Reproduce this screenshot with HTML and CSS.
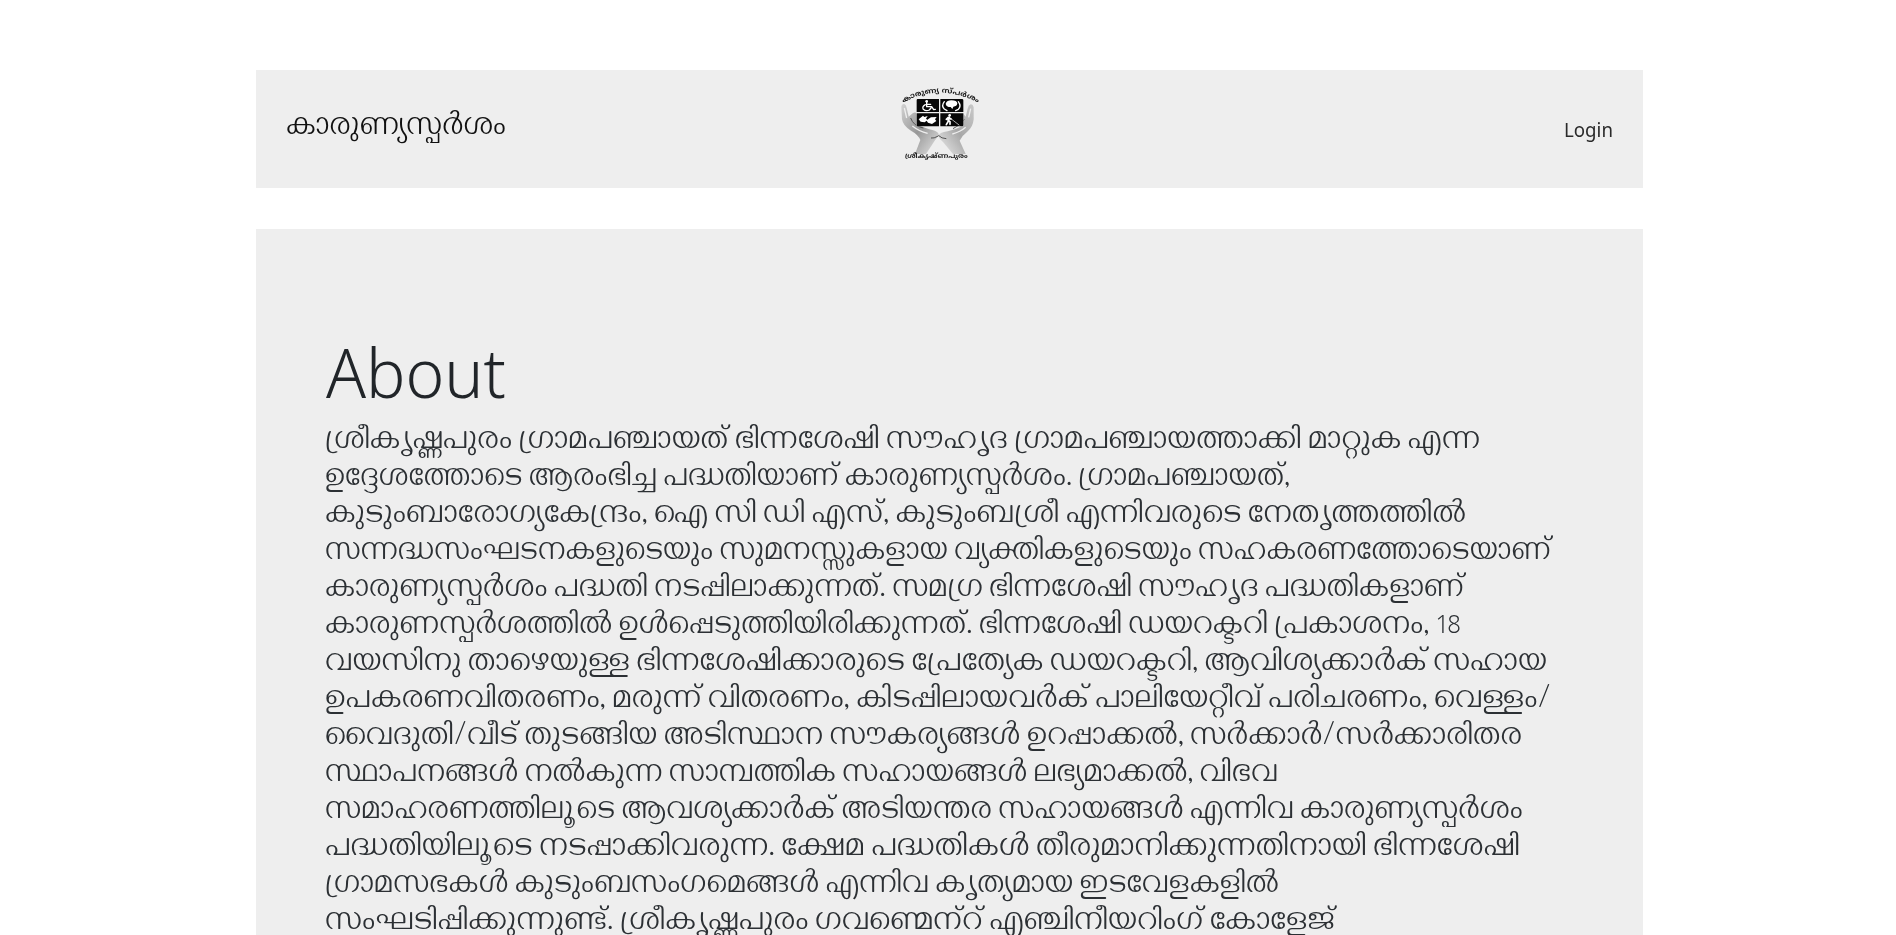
FILE: index.html
```html
<!DOCTYPE html>
<html lang="ml">
<head>
<meta charset="utf-8">
<title>കാരുണ്യസ്പർശം</title>
<link rel="stylesheet" href="styles.css">
</head>
<body>
<header class="navbar">
  <a class="brand"><span class="fit" data-width="220">കാരുണ്യസ്പർശം</span></a>
  <svg class="logo" width="100" height="95" viewBox="0 0 300 285">
    <defs>
      <linearGradient id="skin" x1="0" y1="0" x2="1" y2="1">
        <stop offset="0" stop-color="#d2d2d2"/><stop offset=".5" stop-color="#989898"/><stop offset="1" stop-color="#e4e4e4"/>
      </linearGradient>
      <linearGradient id="skin2" x1="1" y1="0" x2="0" y2="1">
        <stop offset="0" stop-color="#c8c8c8"/><stop offset=".5" stop-color="#a8a8a8"/><stop offset="1" stop-color="#ececec"/>
      </linearGradient>
      <path id="arc" d="M42 80Q150 20 267 80"/>
    </defs>
    <path fill="url(#skin)" d="M37 92q1-10 9-8 6 3 7 12l6 26 12-10q10-6 12 2l3 32q26 12 44 16 16 4 19 12-2 10-12 20l-26 40H78l16-42q-6-16-28-28-24-14-27-34z"/>
    <path fill="url(#skin2)" d="M254 94q-2-10-9-9-7 3-9 13l-6 24-8-10-2 38q-22 12-44 16-26 4-28 14 2 8 14 18l30 36h38l-18-40q6-14 22-26 18-14 20-38z"/>
    <path d="M65 126q8 24 38 30M226 130q-14 20-34 28M148 180q-14 8-22 6M148 178q10 10 24 10" fill="none" stroke="#555" stroke-width="3"/>
    <path d="M46 96l7 30M245 98l-6 26M70 150q20 16 46 22M230 154q-16 14-40 20" fill="none" stroke="#eee" stroke-width="4"/>
    <rect x="82" y="68" width="141" height="83" rx="5" fill="#eee"/>
    <path fill="#070707" d="M86 69h64v39H83V73q0-4 3-4zM154 69h65q4 0 4 4v35h-69zM83 112h67v39H87q-4 0-4-4zM154 112h69v35q0 4-4 4h-65z"/>
    <g fill="none" stroke="#fff" stroke-width="4" stroke-linecap="round" stroke-linejoin="round">
      <path d="M113 78v14h15l6 9 5-1M114 85h11M109 86q-11 6-6 14 8 7 18 2l5-6"/>
      <path d="M166 77q-10 12 0 22l8 5M208 77q10 13 0 23l-8 4"/>
      <path stroke-width="5" d="M181 123l-4 10 6 4v8M180 132l-8 14M172 130l6-6 8 5"/>
      <path stroke-width="2" d="M187 129l23 18"/>
    </g>
    <circle cx="113" cy="76" r="4" fill="#fff"/>
    <circle cx="182" cy="118" r="4" fill="#fff"/>
    <path fill="#fff" d="M170 83q4-10 17-10 17 0 18 9-1 10-12 10l-3 7-5-6q-14 0-15-10zM89 130l13-11 4 4 10-3-5 8 5 4-9 7-12-2zM118 129l8-5 17-1-5 7 4 5-13 9-12-4-4-6z"/>
    <text class="logo-top"><textPath href="#arc" textLength="236" lengthAdjust="spacingAndGlyphs">കാരുണ്യ സ്പർശം</textPath></text>
    <text class="logo-bottom" x="48" y="247" textLength="188" lengthAdjust="spacingAndGlyphs">ശ്രീകൃഷ്ണപുരം</text>
  </svg>
  <a class="login"><span class="fit" data-width="49">Login</span></a>
</header>
<main class="about">
  <h1><span class="fit" data-width="180">About</span></h1>
  <p>
    <span class="line fit" data-width="1155">ശ്രീകൃഷ്ണപുരം ഗ്രാമപഞ്ചായത് ഭിന്നശേഷി സൗഹൃദ ഗ്രാമപഞ്ചായത്താക്കി മാറ്റുക എന്ന</span>
    <span class="line fit" data-width="965">ഉദ്ദേശത്തോടെ ആരംഭിച്ച പദ്ധതിയാണ് കാരുണ്യസ്പർശം. ഗ്രാമപഞ്ചായത്,</span>
    <span class="line fit" data-width="1141">കുടുംബാരോഗ്യകേന്ദ്രം, ഐ സി ഡി എസ്, കുടുംബശ്രീ എന്നിവരുടെ നേതൃത്തത്തിൽ</span>
    <span class="line fit" data-width="1226">സന്നദ്ധസംഘടനകളുടെയും സുമനസ്സുകളായ വ്യക്തികളുടെയും സഹകരണത്തോടെയാണ്</span>
    <span class="line fit" data-width="1139">കാരുണ്യസ്പർശം പദ്ധതി നടപ്പിലാക്കുന്നത്. സമഗ്ര ഭിന്നശേഷി സൗഹൃദ പദ്ധതികളാണ്</span>
    <span class="line fit" data-width="1134">കാരുണസ്പർശത്തിൽ ഉൾപ്പെടുത്തിയിരിക്കുന്നത്. ഭിന്നശേഷി ഡയറക്ടറി പ്രകാശനം, <span class="num">18</span></span>
    <span class="line fit" data-width="1222">വയസിനു താഴെയുള്ള ഭിന്നശേഷിക്കാരുടെ പ്രേത്യേക ഡയറക്ടറി, ആവിശ്യക്കാർക് സഹായ</span>
    <span class="line fit" data-width="1226">ഉപകരണവിതരണം, മരുന്ന് വിതരണം, കിടപ്പിലായവർക് പാലിയേറ്റീവ് പരിചരണം, വെള്ളം/</span>
    <span class="line fit" data-width="1197">വൈദുതി/വീട് തുടങ്ങിയ അടിസ്ഥാന സൗകര്യങ്ങൾ ഉറപ്പാക്കൽ, സർക്കാർ/സർക്കാരിതര</span>
    <span class="line fit" data-width="953">സ്ഥാപനങ്ങൾ നൽകുന്ന സാമ്പത്തിക സഹായങ്ങൾ ലഭ്യമാക്കൽ, വിഭവ</span>
    <span class="line fit" data-width="1198">സമാഹരണത്തിലൂടെ ആവശ്യക്കാർക് അടിയന്തര സഹായങ്ങൾ എന്നിവ കാരുണ്യസ്പർശം</span>
    <span class="line fit" data-width="1195">പദ്ധതിയിലൂടെ നടപ്പാക്കിവരുന്ന. ക്ഷേമ പദ്ധതികൾ തീരുമാനിക്കുന്നതിനായി ഭിന്നശേഷി</span>
    <span class="line fit" data-width="954">ഗ്രാമസഭകൾ കുടുംബസംഗമെങ്ങൾ എന്നിവ കൃത്യമായ ഇടവേളകളിൽ</span>
    <span class="line fit" data-width="1010">സംഘടിപ്പിക്കുന്നുണ്ട്. ശ്രീകൃഷ്ണപുരം ഗവണ്മെന്‌റ് എഞ്ചിനീയറിംഗ് കോളേജ്</span>
  </p>
</main>
<script src="fit.js"></script>
</body>
</html>
```
FILE: styles.css
```css
* { box-sizing: border-box; }
html, body { height: 100%; }
body {
  display: flex;
  flex-direction: column;
  gap: 41px;
  margin: 0;
  padding: 70px 253px 0 256px;
  overflow: hidden;
  background: #fff;
  color: #212529;
  font-family: Gayathri, Manjari, "Noto Sans Malayalam", sans-serif;
  font-weight: 100;
}
.navbar {
  display: grid;
  flex: none;
  grid-template-columns: 603px 100px 1fr;
  height: 118px;
  padding: 6px 30px 0;
  background: #eee;
  color: #111;
}
.brand {
  padding-top: 30px;
  font-size: 35px;
  line-height: 48px;
  font-feature-settings: "psts" 0, "pres" 0;
}
.login {
  justify-self: end;
  padding-top: 39px;
  color: #2a2a2a;
  font: 370 20px/30px "Noto Sans", sans-serif;
}
.logo { display: block; filter: blur(.3px); }
.logo-top { font: 700 21px "Noto Sans Malayalam", sans-serif; fill: #222; }
.logo-bottom { font: 700 19px "Noto Sans Malayalam", sans-serif; fill: #222; }
.about {
  flex: 1;
  min-height: 0;
  overflow: hidden;
  padding: 97px 69px 0;
  background: #eee;
}
h1 {
  margin: 0 0 0 1px;
  font: 300 68px/92px "Noto Sans", sans-serif;
}
p {
  margin: 0;
  padding-top: 7px;
  font-size: 35px;
  line-height: 37px;
  word-spacing: -2px;
  color: #2c3034;
  font-feature-settings: "psts" 0, "pres" 0;
}
.num { font: 300 25px/0 "Noto Sans", sans-serif; letter-spacing: -2px; }
.line { height: 37px; }
.fit {
  display: block;
  width: max-content;
  white-space: nowrap;
  transform-origin: 0 50%;
}
```
FILE: fit.js
```js
// Keep each line at its set measure, whichever font is available.
document.querySelectorAll('.fit').forEach(function (el) {
  var target = Number(el.dataset.width);
  var natural = el.getBoundingClientRect().width;
  el.style.transform = 'scaleX(' + target / natural + ')';
  el.style.width = natural + 'px';
  el.style.marginRight = (target - natural) + 'px';
});
```
